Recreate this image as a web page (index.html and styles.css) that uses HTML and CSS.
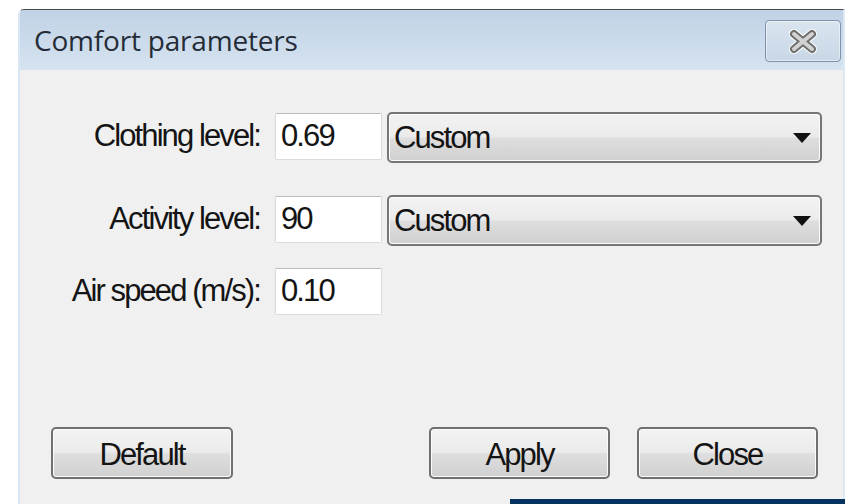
FILE: index.html
```html
<!DOCTYPE html>
<html lang="en">
<head>
<meta charset="utf-8">
<title>Comfort parameters</title>
<link rel="stylesheet" href="styles.css">
</head>
<body>
  <div class="window">
    <div class="titlebar">
      <span class="title">Comfort parameters</span>
      <div class="close-btn">
        <svg width="30" height="25" viewBox="0 0 30 25">
          <path d="M6 5 L24 20 M24 5 L6 20" stroke="#ffffff" stroke-width="10" stroke-linecap="round" fill="none"/>
          <path d="M6 5 L24 20 M24 5 L6 20" stroke="#6f6f6f" stroke-width="8" stroke-linecap="round" fill="none"/>
          <path d="M6 5 L24 20 M24 5 L6 20" stroke="#d2d2d2" stroke-width="4" stroke-linecap="round" fill="none"/>
        </svg>
      </div>
    </div>
    <div class="client">
      <div class="form">
        <div class="row">
          <span class="label">Clothing level:</span>
          <div class="field">0.69</div>
          <div class="combo"><span class="combo-text">Custom</span><span class="arrow"></span></div>
        </div>
        <div class="row">
          <span class="label">Activity level:</span>
          <div class="field">90</div>
          <div class="combo"><span class="combo-text">Custom</span><span class="arrow"></span></div>
        </div>
        <div class="row">
          <span class="label">Air speed (m/s):</span>
          <div class="field">0.10</div>
        </div>
      </div>
      <div class="actions">
        <div class="btn btn-default">Default</div>
        <div class="spacer"></div>
        <div class="btn">Apply</div>
        <div class="btn">Close</div>
      </div>
    </div>
  </div>
  <div class="taskbar-edge"></div>
</body>
</html>
```

FILE: styles.css
```css
html, body {
  margin: 0;
  height: 504px;
  overflow: hidden;
  background: #ffffff;
}

body {
  position: relative;
  box-sizing: border-box;
  padding: 9px 0 0 18px;
  font-family: "Liberation Sans", Arial, sans-serif;
  font-size: 31px;
  letter-spacing: -1.9px;
  color: #141414;
}

/* dialog frame */
.window {
  width: 827px;
  height: 495px;
  box-sizing: border-box;
  border-top: 1px solid #4b4b4b;
  border-left: 2px solid #d9e6f3;
  border-right: 2px solid #dce8f4;
  border-top-left-radius: 6px;
  background: #f0f0f0;
  display: flex;
  flex-direction: column;
  overflow: hidden;
}

.titlebar {
  height: 60px;
  flex: none;
  display: flex;
  justify-content: space-between;
  align-items: flex-start;
  padding-left: 14px;
  padding-right: 2px;
  background: linear-gradient(#c0d2e5, #cfdeed 70%, #d6e3f0);
}

.title {
  margin-top: 16px;
  font-family: "Open Sans", "Noto Sans", sans-serif;
  font-size: 28px;
  line-height: 28px;
  letter-spacing: -0.2px;
  color: #252c37;
}

.close-btn {
  margin-top: 10px;
  width: 76px;
  height: 42px;
  box-sizing: border-box;
  border: 1px solid #8192ab;
  border-radius: 4px;
  background: linear-gradient(#d9e4ef, #c9d7e6);
  box-shadow: inset 0 0 0 1px rgba(255, 255, 255, 0.45);
  display: flex;
  align-items: center;
  justify-content: center;
}

/* client area */
.client {
  flex: 1;
  display: flex;
  flex-direction: column;
  padding-top: 42px;
}

.form {
  display: grid;
  grid-template-rows: 83px 72px 48px;
}

.row {
  display: flex;
  align-items: flex-start;
}

.label {
  width: 240px;
  margin-right: 15px;
  margin-top: 0;
  height: 47px;
  line-height: 47px;
  text-align: right;
  white-space: nowrap;
}

.field {
  width: 107px;
  height: 47px;
  margin-top: 1px;
  box-sizing: border-box;
  border: 1px solid #dadada;
  border-top-color: #b9bcc2;
  border-radius: 2px;
  background: #ffffff;
  line-height: 44px;
  padding-left: 5px;
}

.combo {
  width: 435px;
  height: 51px;
  margin-left: 5px;
  box-sizing: border-box;
  border: 2px solid #767676;
  border-radius: 5px;
  background: linear-gradient(#f3f3f3 0%, #ebebeb 48%, #dedede 52%, #d0d0d0 100%);
  box-shadow: inset 0 0 0 1px #fbfbfb;
  display: flex;
  align-items: flex-start;
  justify-content: space-between;
  padding-left: 5px;
  padding-right: 9px;
}

.combo-text {
  margin-top: 2px;
  line-height: 44px;
}

.arrow {
  align-self: center;
  width: 0;
  height: 0;
  border-left: 9px solid transparent;
  border-right: 9px solid transparent;
  border-top: 10px solid #111111;
}

/* bottom buttons */
.actions {
  margin-top: auto;
  display: flex;
  gap: 27px;
  padding: 0 25px 25px 31px;
}

.spacer {
  flex: 1;
  margin-left: -27px;
}

.btn {
  width: 181px;
  height: 52px;
  box-sizing: border-box;
  border: 2px solid #707070;
  border-radius: 5px;
  background: linear-gradient(#f3f3f3 0%, #ebebeb 48%, #dedede 52%, #d0d0d0 100%);
  box-shadow: inset 0 0 0 1px #fbfbfb;
  padding-top: 4px;
  line-height: 43px;
  text-align: center;
}

.btn-default {
  width: 182px;
}

/* strip of the desktop bar peeking in below the dialog */
.taskbar-edge {
  position: absolute;
  left: 510px;
  top: 499px;
  width: 335px;
  height: 5px;
  background: #06325f;
}
```
